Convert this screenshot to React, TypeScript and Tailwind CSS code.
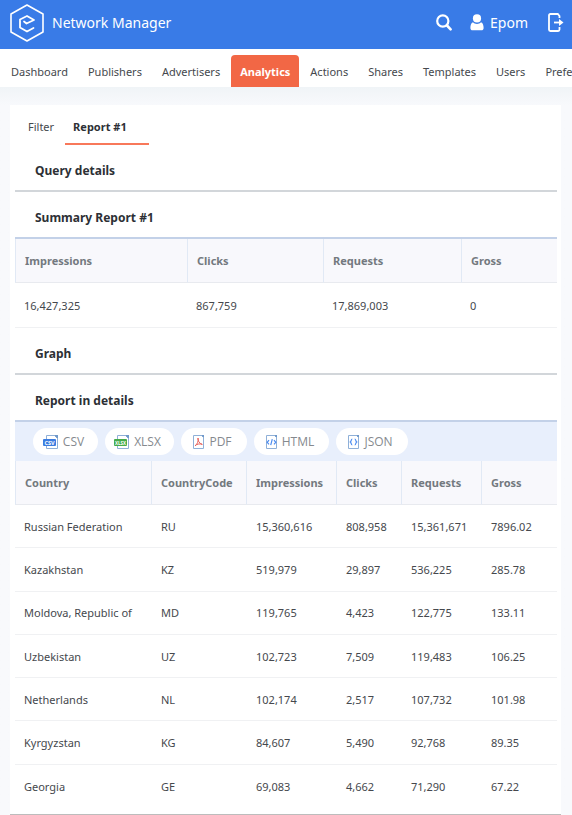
import type { ReactNode } from 'react';
import { clsx } from 'clsx';

const navItems = [
  'Dashboard',
  'Publishers',
  'Advertisers',
  'Analytics',
  'Actions',
  'Shares',
  'Templates',
  'Users',
  'Preferences',
];

const summary = [
  { label: 'Impressions', value: '16,427,325', width: 'w-[172px]' },
  { label: 'Clicks', value: '867,759', width: 'w-[136px]' },
  { label: 'Requests', value: '17,869,003', width: 'w-[138px]' },
  { label: 'Gross', value: '0', width: '' },
];

const columns = [
  { label: 'Country', width: 'w-[136px]' },
  { label: 'CountryCode', width: 'w-[95px]' },
  { label: 'Impressions', width: 'w-[90px]' },
  { label: 'Clicks', width: 'w-[65px]' },
  { label: 'Requests', width: 'w-[80px]' },
  { label: 'Gross', width: '' },
];

const rows = [
  ['Russian Federation', 'RU', '15,360,616', '808,958', '15,361,671', '7896.02'],
  ['Kazakhstan', 'KZ', '519,979', '29,897', '536,225', '285.78'],
  ['Moldova, Republic of', 'MD', '119,765', '4,423', '122,775', '133.11'],
  ['Uzbekistan', 'UZ', '102,723', '7,509', '119,483', '106.25'],
  ['Netherlands', 'NL', '102,174', '2,517', '107,732', '101.98'],
  ['Kyrgyzstan', 'KG', '84,607', '5,490', '92,768', '89.35'],
  ['Georgia', 'GE', '69,083', '4,662', '71,290', '67.22'],
];

function Logo() {
  return (
    <svg width="34" height="38" viewBox="0 0 34 38" fill="none" stroke="white" strokeLinejoin="round" strokeLinecap="round">
      <path d="M17 1L33 10V28L17 37L1 28V10Z" strokeWidth="1.6" />
      <path d="M14 17.5L16.5 19.5L24 16L17 12L10 15.5V23.5L17 27.5L23.5 24" strokeWidth="1.8" />
    </svg>
  );
}

function SearchIcon() {
  return (
    <svg width="16" height="17" viewBox="0 0 16 17" fill="none" stroke="white" strokeLinecap="round">
      <circle cx="6.8" cy="7" r="5.6" strokeWidth="2.2" />
      <path d="M11 11.5L14.6 15.3" strokeWidth="2.6" />
    </svg>
  );
}

function UserIcon() {
  return (
    <svg width="14" height="17" viewBox="0 0 14 17" fill="white">
      <circle cx="7" cy="4.4" r="4.1" />
      <path d="M3 8.3C4 9.3 5.4 9.9 7 9.9S10 9.3 11 8.3C13 9 13.6 11.6 13.6 14C13.6 15.6 12.7 16.3 11.4 16.3H2.6C1.3 16.3 0.4 15.6 0.4 14C0.4 11.6 1 9 3 8.3Z" />
    </svg>
  );
}

function LogoutIcon() {
  return (
    <svg width="16" height="19" viewBox="0 0 16 19" fill="none" stroke="white" strokeWidth="1.8">
      <path d="M11.5 5V3L9.8 1H2.4C1.5 1 1 1.5 1 2.4V16.6C1 17.5 1.5 18 2.4 18H10.1C11 18 11.5 17.5 11.5 16.6V14" />
      <path d="M6 9.5H13" />
      <path d="M11 6L15.5 9.5L11 13Z" fill="white" stroke="none" />
    </svg>
  );
}

function FileOutline({ children }: { children: ReactNode }) {
  return (
    <svg width="16" height="16" viewBox="0 0 16 16" fill="none">
      <path d="M3.5 1.5H11.5L14.5 4.5V14.5H3.5Z" stroke="#8fb0d8" />
      <path d="M11 1H15V5Z" fill="#6f98c9" />
      {children}
    </svg>
  );
}

function BadgeFileIcon({ label, fill }: { label: string; fill: string }) {
  return (
    <FileOutline>
      <rect x="0" y="5" width="13" height="7" rx="1" fill={fill} />
      <text x="6.5" y="10.5" textAnchor="middle" fontSize={label.length > 3 ? 4.5 : 5.5} fontWeight="700" fill="white">
        {label}
      </text>
    </FileOutline>
  );
}

function PageIcon({ children }: { children: ReactNode }) {
  return (
    <svg width="13" height="16" viewBox="0 0 13 16" fill="none">
      <path d="M1.5 1.5H9.5L11.5 3.5V14.5H1.5Z" stroke="#8fb0d8" />
      <path d="M9 1H12V4Z" fill="#6f98c9" />
      {children}
    </svg>
  );
}

const exportButtons = [
  { label: 'CSV', width: 'w-[65px]', icon: <BadgeFileIcon label="CSV" fill="#3b7ce0" /> },
  { label: 'XLSX', width: 'w-[69px]', icon: <BadgeFileIcon label="XLSX" fill="#45ab4b" /> },
  {
    label: 'PDF',
    width: 'w-[66px]',
    icon: (
      <PageIcon>
        <path
          d="M6 4C5.8 6.8 7.2 9.4 10.3 10.4C7.6 9.4 4.8 10 3 11.8C5 10.6 6.8 7.4 6 4Z"
          stroke="#e8605a"
          strokeLinejoin="round"
        />
      </PageIcon>
    ),
  },
  {
    label: 'HTML',
    width: 'w-[75px]',
    icon: (
      <PageIcon>
        <path d="M4 6.2L2.2 8.3L4 10.4M9 6.2L10.8 8.3L9 10.4M7.3 5.2L5.7 11.2" stroke="#4c8cf0" strokeWidth="1.2" />
      </PageIcon>
    ),
  },
  {
    label: 'JSON',
    width: 'w-[72px]',
    icon: (
      <PageIcon>
        <path
          d="M5.3 5C3.9 5 4.6 7.2 3.3 8C4.6 8.8 3.9 11 5.3 11M7.7 5C9.1 5 8.4 7.2 9.7 8C8.4 8.8 9.1 11 7.7 11"
          stroke="#4c8cf0"
          strokeWidth="1.2"
        />
      </PageIcon>
    ),
  },
];

function SectionTitle({ title, accent = false }: { title: string; accent?: boolean }) {
  return (
    <h2
      className={clsx(
        'flex h-[47px] items-center border-b-2 pt-1.5 pl-5 text-xs font-bold text-[#2d3035]',
        accent ? 'border-[#c3d1e8]' : 'border-[#d2d6da]'
      )}
    >
      {title}
    </h2>
  );
}

function HeadCell({ label, width }: { label: string; width: string }) {
  return (
    <th
      scope="col"
      className={clsx(
        'h-11 border-b border-l border-b-[#e8eaef] border-l-[#e1e9f5] bg-[#f8f8fc] pt-0.5 pl-[9px] text-left font-bold text-[#73797f]',
        width
      )}
    >
      {label}
    </th>
  );
}

export default function App() {
  return (
    <div className="min-h-screen overflow-hidden bg-[#f8f9fc] font-['Noto_Sans','Open_Sans',sans-serif] text-[11px] text-[#45484d]">
      <header className="flex h-[49px] items-center bg-[#397be7] pr-2 pb-1 pl-2.5 text-white">
        <Logo />
        <h1 className="ml-2 flex-1 text-sm">Network Manager</h1>
        <button type="button" aria-label="Search" className="mr-[18px]">
          <SearchIcon />
        </button>
        <button type="button" className="mr-5 flex items-center gap-1.5 text-sm">
          <UserIcon />
          Epom
        </button>
        <button type="button" aria-label="Log out">
          <LogoutIcon />
        </button>
      </header>

      <nav className="flex h-[38px] items-end gap-0.5 overflow-hidden bg-white pl-0.5">
        {navItems.map(item => (
          <a
            key={item}
            href="#"
            className={clsx(
              'flex h-8 shrink-0 items-center rounded-t px-[9px] pt-0.5',
              item === 'Analytics' && 'bg-[#f26745] font-bold text-white'
            )}
          >
            {item}
          </a>
        ))}
      </nav>

      <div className="bg-linear-to-b from-[#f0f4f7] to-[#f8f9fc] to-[18px] pt-[18px] pr-[11px] pl-2.5">
        <main className="border-b border-[#bcbcbc] bg-white pr-1 pb-1.5 pl-[5px]">
          <div className="flex pt-3 pl-[5px]">
            <button type="button" className="border-b-2 border-transparent px-2 pb-1.5 leading-5">
              Filter
            </button>
            <button type="button" className="ml-[3px] w-[84px] border-b-2 border-[#f8785a] pb-1.5 pl-2 text-left leading-5 font-bold text-[#2d3035]">
              Report #1
            </button>
          </div>

          <SectionTitle title="Query details" />
          <SectionTitle title="Summary Report #1" accent />
          <table className="w-full table-fixed border-separate border-spacing-0">
            <thead>
              <tr>
                {summary.map(col => (
                  <HeadCell key={col.label} label={col.label} width={col.width} />
                ))}
              </tr>
            </thead>
            <tbody>
              <tr>
                {summary.map(col => (
                  <td key={col.label} className="h-[45px] border-b border-[#f0f1f3] pt-0.5 pl-[9px]">
                    {col.value}
                  </td>
                ))}
              </tr>
            </tbody>
          </table>

          <SectionTitle title="Graph" />
          <SectionTitle title="Report in details" accent />
          <div className="flex h-[39px] items-center gap-[7px] bg-[#e8effc] pl-[18px]">
            {exportButtons.map(({ label, width, icon }) => (
              <button
                key={label}
                type="button"
                className={clsx(
                  "flex h-[27px] items-center justify-center gap-1 rounded-full bg-white pr-1 font-['Open_Sans','Noto_Sans',sans-serif] text-xs text-[#85898e]",
                  width
                )}
              >
                {icon}
                {label}
              </button>
            ))}
          </div>
          <table className="h-[347px] w-full table-fixed border-separate border-spacing-0">
            <thead>
              <tr>
                {columns.map(col => (
                  <HeadCell key={col.label} label={col.label} width={col.width} />
                ))}
              </tr>
            </thead>
            <tbody>
              {rows.map((row, rowIndex) => (
                <tr key={row[1]}>
                  {row.map((cell, i) => (
                    <td
                      key={columns[i].label}
                      className={clsx(
                        'h-[43px] border-[#f0f1f3] pt-0.5',
                        rowIndex < rows.length - 1 && 'border-b',
                        i === 0 ? 'pl-[9px]' : 'pl-2.5'
                      )}
                    >
                      {cell}
                    </td>
                  ))}
                </tr>
              ))}
            </tbody>
          </table>
        </main>
      </div>
    </div>
  );
}
